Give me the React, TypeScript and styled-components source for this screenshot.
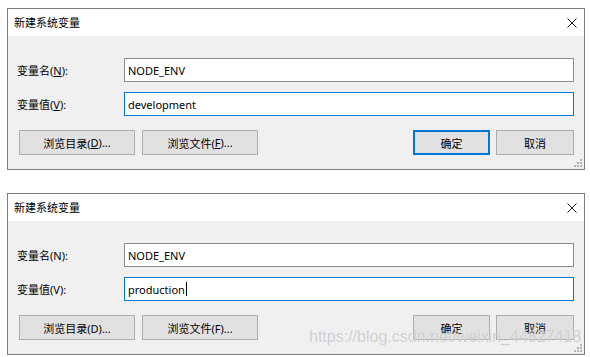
import React from "react";
import styled, { createGlobalStyle } from "styled-components";

const GlobalStyle = createGlobalStyle`
  html, body { margin: 0; padding: 0; background: #ffffff; }
  body {
    font-family: "Noto Sans", "Noto Sans CJK SC", sans-serif;
    font-size: 11px;
    color: #000;
  }
`;

const Page = styled.div`
  display: flex;
  flex-direction: column;
  gap: 23px;
  padding: 8px 0 0 7px;
`;

const Dialog = styled.div`
  position: relative;
  width: 578px;
  box-sizing: border-box;
  border: 1px solid #7f7f7f;
  background: #f0f0f0;
`;

const TitleBar = styled.div`
  height: 27px;
  background: #ffffff;
  display: flex;
  align-items: center;
  justify-content: space-between;
  padding: 0 7px 0 6px;
`;

const Title = styled.span`
  font-size: 11px;
  line-height: 1;
`;

const Body = styled.div`
  padding: 22px 10px 14px 9px;
  display: flex;
  flex-direction: column;
`;

const Fields = styled.div`
  display: grid;
  grid-template-columns: 107px 450px;
  row-gap: 10px;
  align-items: center;
`;

const Label = styled.span`
  font-size: 11px;
`;

const TextBox = styled.div<{ $focused?: boolean }>`
  box-sizing: border-box;
  height: 24px;
  border: 1px solid ${(p) => (p.$focused ? "#0078d7" : "#8c8c8c")};
  background: #ffffff;
  padding: 0 3px;
  display: flex;
  align-items: center;
  font-size: 11px;
`;

const Caret = styled.span`
  display: inline-block;
  width: 1px;
  height: 14px;
  background: #000;
  margin-left: 1px;
`;

const ButtonRow = styled.div`
  display: flex;
  margin-top: 14px;
  padding-left: 2px;
  gap: 7px;
`;

const RightGroup = styled.div`
  margin-left: auto;
  display: flex;
  gap: 6px;
`;

const Button = styled.div<{ $w: number; $default?: boolean }>`
  box-sizing: border-box;
  width: ${(p) => p.$w}px;
  height: 25px;
  border: ${(p) => (p.$default ? "2px solid #0078d7" : "1px solid #adadad")};
  background: #e1e1e1;
  display: flex;
  align-items: center;
  justify-content: center;
  font-size: 11px;
`;

const Grip = styled.svg`
  position: absolute;
  right: 1px;
  bottom: 1px;
`;

const Watermark = styled.div`
  position: absolute;
  left: 301px;
  top: 135px;
  font-family: "Liberation Sans", Arial, sans-serif;
  font-size: 16px;
  line-height: 16px;
  color: rgba(185, 185, 185, 0.7);
  text-shadow: 0 0 1px rgba(255, 255, 255, 0.9);
  white-space: nowrap;
  pointer-events: none;
`;

const CloseIcon = () => (
  <svg width="10" height="10" viewBox="0 0 10 10">
    <path d="M0.5 0.5 L9.5 9.5 M9.5 0.5 L0.5 9.5" stroke="#1a1a1a" strokeWidth="1" fill="none" />
  </svg>
);

const GripIcon = () => (
  <Grip width="9" height="9" viewBox="0 0 9 9">
    {[
      [6, 0],
      [6, 3],
      [3, 3],
      [6, 6],
      [3, 6],
      [0, 6],
    ].map(([x, y], i) => (
      <rect key={i} x={x} y={y} width="2" height="2" fill="#b4b4b4" />
    ))}
  </Grip>
);

const Mn: React.FC<{ on: boolean; ch: string }> = ({ on, ch }) =>
  on ? <u>{ch}</u> : <>{ch}</>;

type DialogProps = {
  value: string;
  mnemonics: boolean;
  okDefault: boolean;
  caret?: boolean;
  watermark?: boolean;
};

const EnvDialog: React.FC<DialogProps> = ({ value, mnemonics, okDefault, caret, watermark }) => (
  <Dialog>
    <TitleBar>
      <Title>新建系统变量</Title>
      <CloseIcon />
    </TitleBar>
    <Body>
      <Fields>
        <Label>
          变量名(<Mn on={mnemonics} ch="N" />):
        </Label>
        <TextBox>NODE_ENV</TextBox>
        <Label>
          变量值(<Mn on={mnemonics} ch="V" />):
        </Label>
        <TextBox $focused>
          {value}
          {caret && <Caret />}
        </TextBox>
      </Fields>
      <ButtonRow>
        <Button $w={116}>
          浏览目录(<Mn on={mnemonics} ch="D" />)...
        </Button>
        <Button $w={116}>
          浏览文件(<Mn on={mnemonics} ch="F" />)...
        </Button>
        <RightGroup>
          <Button $w={77} $default={okDefault}>
            确定
          </Button>
          <Button $w={78}>取消</Button>
        </RightGroup>
      </ButtonRow>
    </Body>
    <GripIcon />
    {watermark && <Watermark>https://blog.csdn.net/weixin_44827418</Watermark>}
  </Dialog>
);

export default function App() {
  return (
    <>
      <GlobalStyle />
      <Page>
        <EnvDialog value="development" mnemonics okDefault />
        <EnvDialog value="production" mnemonics={false} okDefault={false} caret watermark />
      </Page>
    </>
  );
}
